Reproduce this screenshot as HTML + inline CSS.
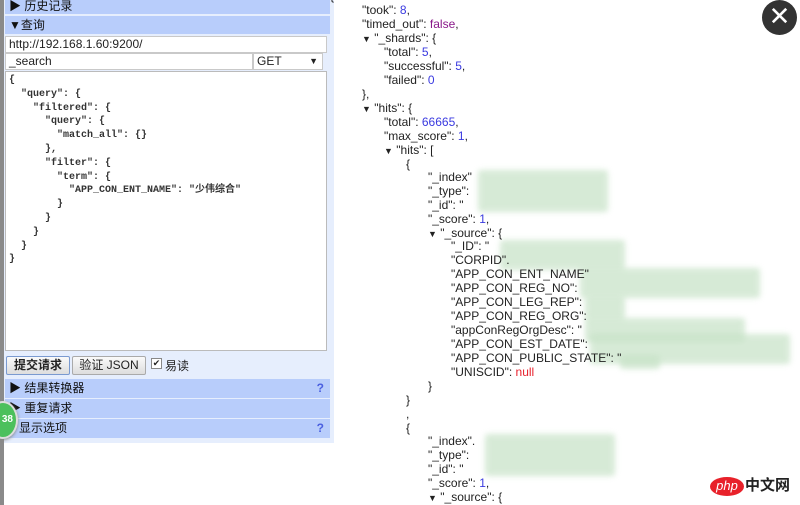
<!DOCTYPE html>
<html><head><meta charset="utf-8">
<style>
*{margin:0;padding:0;box-sizing:border-box}
body{width:800px;height:505px;overflow:hidden;background:#fff;position:relative;font-family:"Liberation Sans","Noto Sans CJK SC",sans-serif;font-size:12px;color:#222}
.abs{position:absolute}
.strip{left:0;top:0;width:4px;height:505px;background:#8a8a8a}
.panel{left:4px;top:0;width:330px;height:443px;background:#e6eefd}
.hdr{position:absolute;left:5px;width:325px;background:#b8cdfb;font-size:12px;line-height:18px;padding-left:4px;color:#111}
.inp{position:absolute;background:#fff;border:1px solid #c9c9c9;font-size:12px;line-height:15px;padding-left:3px}
.ta{left:5px;top:71px;width:322px;height:280px;background:#fff;border:1px solid #bbb;font-family:"Liberation Mono","Noto Sans CJK SC",monospace;font-size:10px;font-weight:bold;color:#333;line-height:13.8px;padding:2px 0 0 3px;white-space:pre}
.btn{position:absolute;top:355px;height:19px;border:1px solid #aaa;background:linear-gradient(#fafafa,#ddd);font-size:12px;line-height:17px;text-align:center;border-radius:2px}
.q{position:absolute;right:6px;color:#4a5fe0;font-weight:bold}
.l{position:absolute;font-size:12px;line-height:14px;white-space:pre;color:#222}
.n{color:#3a3ae0}.f{color:#8a1a8a}.nl{color:#e8222e}
.tri{font-size:9px}
.blur{position:absolute;background:#c6e2c6;filter:blur(3px);opacity:.7;border-radius:3px}
</style></head><body>
<div class="abs strip"></div>
<div class="abs panel"></div>
<div class="hdr" style="top:0;height:14px;line-height:12px">▶ 历史记录</div>
<div class="hdr" style="top:16px;height:18px">▼查询</div>
<div class="inp" style="left:5px;top:36px;width:322px;height:17px">http://192.168.1.60:9200/</div>
<div class="inp" style="left:5px;top:53px;width:248px;height:17px">_search</div>
<div class="inp" style="left:253px;top:53px;width:70px;height:17px">GET<span style="position:absolute;right:4px;font-size:9px">▼</span></div>
<div class="abs ta">{
  "query": {
    "filtered": {
      "query": {
        "match_all": {}
      },
      "filter": {
        "term": {
          "APP_CON_ENT_NAME": "少伟综合"
        }
      }
    }
  }
}</div>
<div class="btn" style="left:6px;top:356px;width:64px;font-weight:bold;border-color:#7a9ad0">提交请求</div>
<div class="btn" style="left:72px;top:356px;width:74px">验证 JSON</div>
<div class="abs" style="left:151px;top:358px;width:11px;height:11px;border:1px solid #888;background:#fff;font-size:9px;line-height:9px;text-align:center">✔</div>
<div class="abs" style="left:165px;top:357px;font-size:12px">易读</div>
<div class="hdr" style="top:379px;height:19px">▶ 结果转换器<span class="q">?</span></div>
<div class="hdr" style="top:399px;height:19px">▶ 重复请求</div>
<div class="hdr" style="top:419px;height:19px">&nbsp;&nbsp;&nbsp;显示选项<span class="q">?</span></div>
<div class="abs" style="left:-12px;top:401px;width:30px;height:38px;border-radius:50%;background:#4cc05c;border:2px solid #ddd;box-shadow:0 1px 3px #888;color:#fff;font-size:10px;font-weight:bold;line-height:34px;text-align:right;padding-right:3px">38</div>

<div class="blur" style="left:478px;top:170px;width:130px;height:42px"></div>
<div class="blur" style="left:500px;top:240px;width:125px;height:30px"></div>
<div class="blur" style="left:580px;top:268px;width:180px;height:30px"></div>
<div class="blur" style="left:585px;top:296px;width:40px;height:24px"></div>
<div class="blur" style="left:585px;top:318px;width:160px;height:24px"></div>
<div class="blur" style="left:590px;top:334px;width:200px;height:30px"></div>
<div class="blur" style="left:620px;top:355px;width:40px;height:14px"></div>
<div class="blur" style="left:485px;top:434px;width:130px;height:42px"></div>

<div class="l" style="left:330px;top:-11px">{</div>
<div class="l" style="left:362px;top:3px">"took": <span class="n">8</span>,</div>
<div class="l" style="left:362px;top:17px">"timed_out": <span class="f">false</span>,</div>
<div class="l" style="left:362px;top:31px"><span class="tri">▼</span> "_shards": {</div>
<div class="l" style="left:384px;top:45px">"total": <span class="n">5</span>,</div>
<div class="l" style="left:384px;top:59px">"successful": <span class="n">5</span>,</div>
<div class="l" style="left:384px;top:73px">"failed": <span class="n">0</span></div>
<div class="l" style="left:362px;top:87px">},</div>
<div class="l" style="left:362px;top:101px"><span class="tri">▼</span> "hits": {</div>
<div class="l" style="left:384px;top:115px">"total": <span class="n">66665</span>,</div>
<div class="l" style="left:384px;top:129px">"max_score": <span class="n">1</span>,</div>
<div class="l" style="left:384px;top:143px"><span class="tri">▼</span> "hits": [</div>
<div class="l" style="left:406px;top:157px">{</div>
<div class="l" style="left:428px;top:170px">"_index"</div>
<div class="l" style="left:428px;top:184px">"_type":</div>
<div class="l" style="left:428px;top:198px">"_id": "</div>
<div class="l" style="left:428px;top:212px">"_score": <span class="n">1</span>,</div>
<div class="l" style="left:428px;top:226px"><span class="tri">▼</span> "_source": {</div>
<div class="l" style="left:451px;top:239px">"_ID": "</div>
<div class="l" style="left:451px;top:253px">"CORPID".</div>
<div class="l" style="left:451px;top:267px">"APP_CON_ENT_NAME"</div>
<div class="l" style="left:451px;top:281px">"APP_CON_REG_NO":</div>
<div class="l" style="left:451px;top:295px">"APP_CON_LEG_REP":</div>
<div class="l" style="left:451px;top:309px">"APP_CON_REG_ORG":</div>
<div class="l" style="left:451px;top:323px">"appConRegOrgDesc": "</div>
<div class="l" style="left:451px;top:337px">"APP_CON_EST_DATE":</div>
<div class="l" style="left:451px;top:351px">"APP_CON_PUBLIC_STATE": "</div>
<div class="l" style="left:451px;top:365px">"UNISCID": <span class="nl">null</span></div>
<div class="l" style="left:428px;top:379px">}</div>
<div class="l" style="left:406px;top:393px">}</div>
<div class="l" style="left:406px;top:407px">,</div>
<div class="l" style="left:406px;top:421px">{</div>
<div class="l" style="left:428px;top:434px">"_index".</div>
<div class="l" style="left:428px;top:448px">"_type":</div>
<div class="l" style="left:428px;top:462px">"_id": "</div>
<div class="l" style="left:428px;top:476px">"_score": <span class="n">1</span>,</div>
<div class="l" style="left:428px;top:490px"><span class="tri">▼</span> "_source": {</div>

<div class="abs" style="left:762px;top:0;width:35px;height:35px;border-radius:50%;background:#333;color:#fff;font-size:26px;line-height:33px;text-align:center">✕</div>
<div class="abs" style="left:710px;top:477px;width:34px;height:19px;border-radius:50%;background:#e8212a;color:#fff;font-size:13px;line-height:17px;text-align:center;font-style:italic">php</div>
<div class="abs" style="left:745px;top:476px;font-size:15px;font-weight:bold;color:#222;line-height:20px">中文网</div>
</body></html>
